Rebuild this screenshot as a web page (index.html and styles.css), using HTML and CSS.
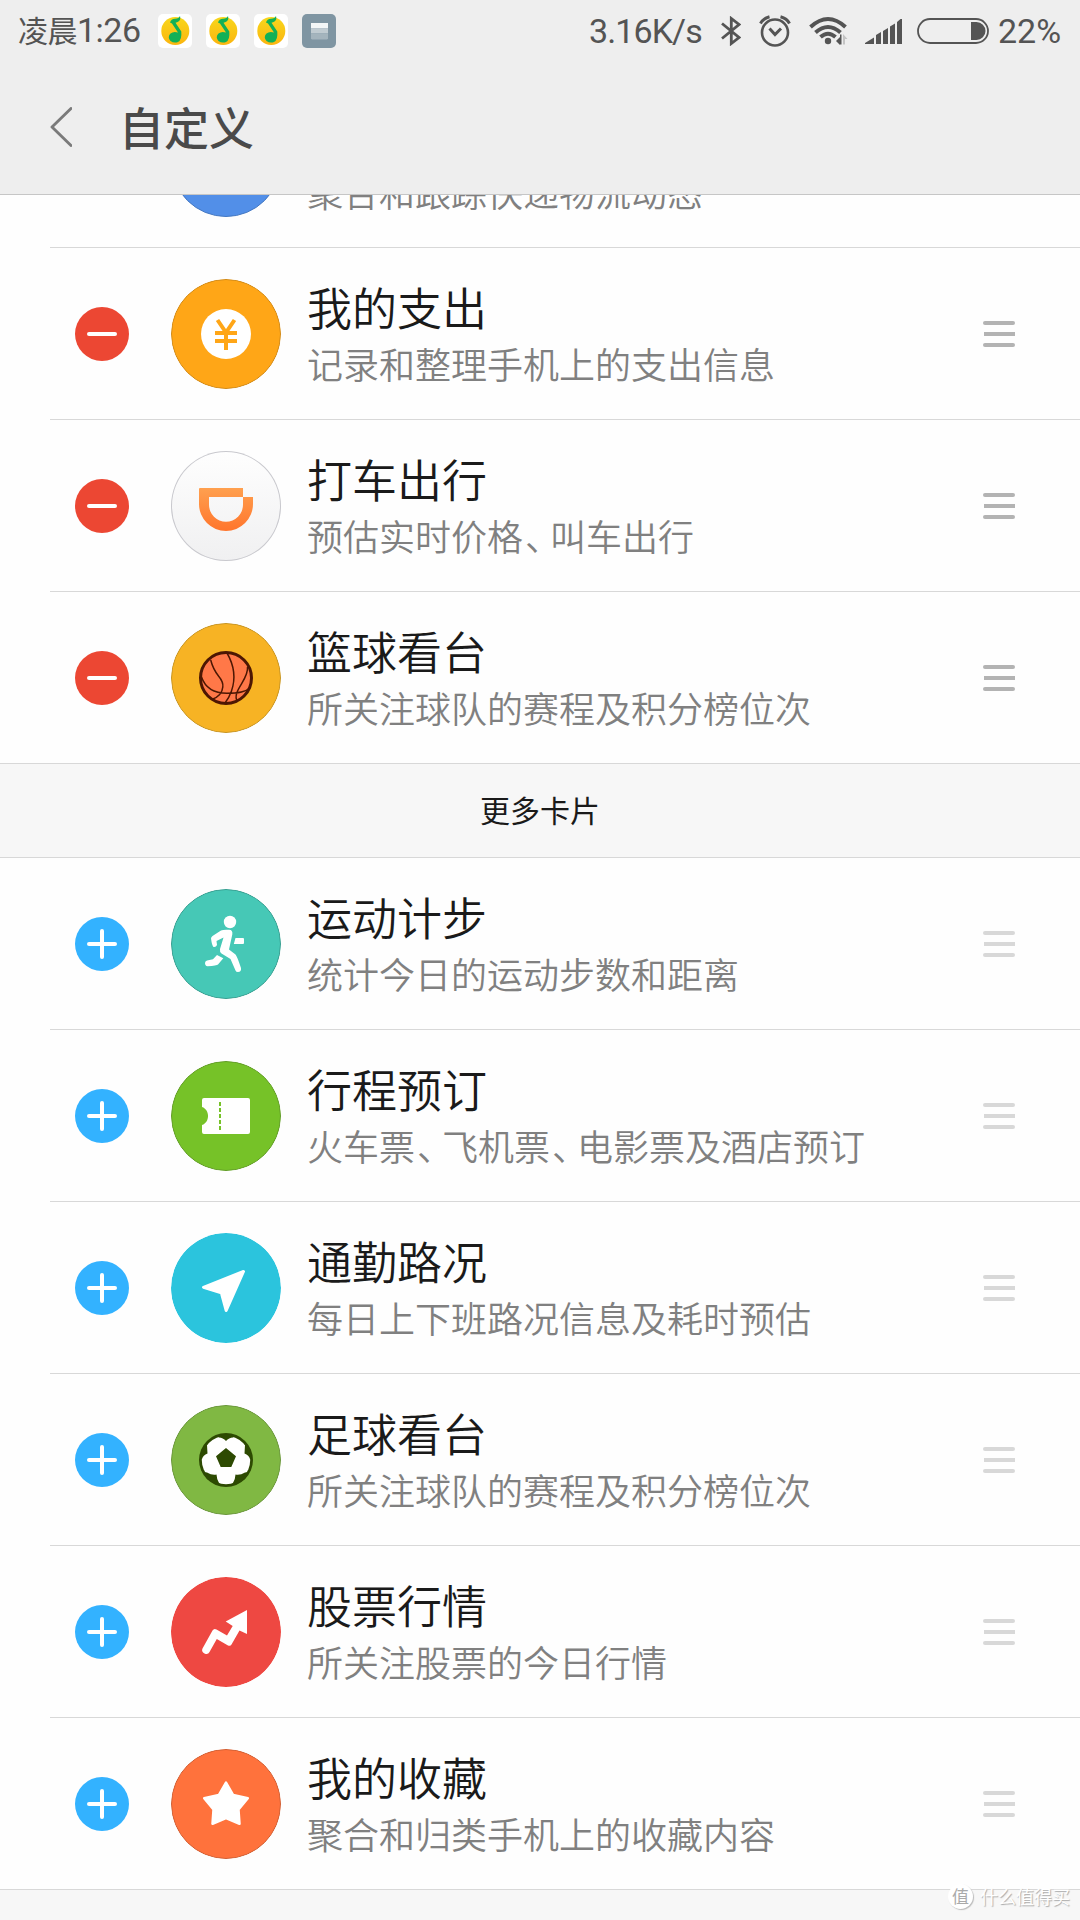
FILE: index.html
```html
<!DOCTYPE html>
<html lang="zh-CN">
<head>
<meta charset="utf-8">
<title>自定义</title>
<link rel="stylesheet" href="styles.css">
</head>
<body>
<svg class="defs" width="0" height="0" aria-hidden="true">
  <defs>
    <linearGradient id="gold" x1="0" y1="0" x2="0" y2="1"><stop offset="0" stop-color="#f8d71c"/><stop offset="1" stop-color="#fbb50f"/></linearGradient>
    <linearGradient id="didi" x1="0" y1="0" x2="0" y2="1"><stop offset="0" stop-color="#ffa04f"/><stop offset="1" stop-color="#ff752c"/></linearGradient>
    <symbol id="music" viewBox="0 0 34 34">
      <rect width="34" height="34" rx="5" fill="#fff"/>
      <circle cx="17.3" cy="17" r="14" fill="url(#gold)"/>
      <path d="M12 8.500Q13 5 17 4.700Q21 4.500 22 2Q23 6 20.500 7.500Q19 8.500 17.500 8.800L23.300 17.500Q24 26 20 28Q16 29.500 12.500 27Q9 23 12.500 19.500Q15.500 17 20 18.500L14 9.500Z" fill="#12b057"/>
    </symbol>
  </defs>
</svg>

<header class="top">
  <div class="status">
    <div class="status-left">
      <span class="clock"><span class="cjk">凌晨</span>1:26</span>
      <svg class="app"><use href="#music"/></svg>
      <svg class="app"><use href="#music"/></svg>
      <svg class="app"><use href="#music"/></svg>
      <svg class="app" viewBox="0 0 34 34"><rect width="34" height="34" rx="5" fill="#7f95a2"/><rect x="9" y="9" width="17" height="5.500" fill="#f3f6f7"/><rect x="9" y="15" width="17" height="4.500" fill="#c0cbd1"/><path d="M9 20H26V24.500L25 25.500H10L9 24.500Z" fill="#a4b4bd"/></svg>
    </div>
    <div class="status-right">
      <span class="speed">3.16K/s</span>
      <svg class="bt" viewBox="0 0 20 30" fill="none" stroke="#545454" stroke-width="2.800"><path d="M1 7.500L18 21.500L10.300 27.500V2.500L18 8.500L1 22.500"/></svg>
      <svg class="alarm" viewBox="0 0 32 32" fill="none" stroke="#545454" stroke-width="2.600"><circle cx="16" cy="17.500" r="13"/><path d="M10.500 13.500L16 19.500L22 13.500M1.500 8.500Q4 3.500 10.500 1.800M30.500 8.500Q28 3.500 21.500 1.800" stroke-width="3"/></svg>
      <svg class="wifi" viewBox="0 0 38 28"><g fill="none" stroke="#545454" stroke-width="4"><path d="M1.500 10Q19-6 36.500 10M6.500 15.500Q19 4.500 31.500 15.500M11.500 20Q19 13.500 26.500 20"/></g><circle cx="19" cy="24" r="3.200" fill="#545454"/><path d="M27 24L31 20V28Z" fill="#545454"/><path d="M31 17.500h1.500v10h-1.500z" fill="#545454"/><path d="M34 17L38.500 22H36V27.500H34Z" fill="#c4c4c4"/></svg>
      <svg class="signal" viewBox="0 0 37 25" fill="#545454"><path d="M0 25V24L9 18.500V25ZM11 25V16L16 13V25ZM18 25V12L23 9V25ZM25 25V7.500L30 4.500V25ZM32 25V3L35.500 0H37V25Z"/></svg>
      <svg class="battery" viewBox="0 0 72 26"><rect x="1" y="1" width="70" height="24" rx="12" fill="none" stroke="#545454" stroke-width="1.800"/><path d="M54 4H59.500A9 9 0 0 1 59.500 22H54Z" fill="#545454"/></svg>
      <span class="percent">22%</span>
    </div>
  </div>
  <div class="titlebar">
    <svg class="back" viewBox="0 0 22 40"><path d="M21 1.500L2 20L21 38.500" fill="none" stroke="#7a7a7a" stroke-width="2.900" stroke-linecap="round" stroke-linejoin="round"/></svg>
    <h1>自定义</h1>
  </div>
</header>

<main class="list">
  <section class="active">
    <div class="row first">
      <span class="icon blue"></span>
      <div class="text"><p>聚合和跟踪快递物流动态</p></div>
    </div>
    <div class="row">
      <span class="toggle remove"></span>
      <svg class="icon" viewBox="0 0 110 110"><circle cx="55" cy="55" r="54.500" fill="#ffa617" stroke="#d18a18"/><circle cx="55" cy="55" r="25" fill="#fff"/><path d="M46.500 41L55 53.500L63.500 41M44 54H66M44 62H66M55 52V71" fill="none" stroke="#ffa617" stroke-width="4"/></svg>
      <div class="text"><h2>我的支出</h2><p>记录和整理手机上的支出信息</p></div>
      <span class="drag"></span>
    </div>
    <div class="row">
      <span class="toggle remove"></span>
      <svg class="icon white" viewBox="0 0 110 110"><path fill-rule="evenodd" fill="url(#didi)" d="M29 37H72V46H82V53A27 27 0 0 1 28 53V38A1 1 0 0 1 29 37ZM38 46V53.700A17 17 0 0 0 72 53.700V46Z"/></svg>
      <div class="text"><h2>打车出行</h2><p>预估实时价格<span class="comma">、</span>叫车出行</p></div>
      <span class="drag"></span>
    </div>
    <div class="row">
      <span class="toggle remove"></span>
      <svg class="icon" viewBox="0 0 110 110"><circle cx="55" cy="55" r="54.500" fill="#f7b324" stroke="#c69424"/><circle cx="55" cy="55" r="25.500" fill="#ff7848" stroke="#4d1703" stroke-width="3"/><path d="M39.700 37Q42 46 47.500 53Q52.500 59 51.800 64Q51 73 40.700 76.500M56 30Q67 49 60.500 68Q58 75 54 80M76.500 44C78 57 60 68 66.500 79M30.500 54C35 67 45 70.300 56 70.300S74 69.500 79 65" fill="none" stroke="#4d1703" stroke-width="1.500"/></svg>
      <div class="text"><h2>篮球看台</h2><p>所关注球队的赛程及积分榜位次</p></div>
      <span class="drag"></span>
    </div>
  </section>

  <div class="divider">更多卡片</div>

  <section class="more">
    <div class="row">
      <span class="toggle add"></span>
      <svg class="icon" viewBox="0 0 110 110"><circle cx="55" cy="55" r="54.500" fill="#46c8b6" stroke="#389e90"/><g fill="#fff"><circle cx="59" cy="33" r="6.200"/><path d="M50 41.500Q52 40.500 58 40.800Q62 41 61.300 45.500L58 60.500L64.500 65.500Q66 67 70 79Q70.500 83 67 83Q65 83 64.500 81.500L59.500 70L50.500 64.500Q48.500 63 49 60L52.500 48.500L45.500 52L46 56Q45 58.500 42.500 58Q41 57 40 49.500Q40 48 41.500 47ZM64.500 49H72Q73 49 73 50V54Q73 55 72 55H62.800ZM46 66L52.300 69.300L47 75.500Q46 76.500 36.500 77.300Q34 77 34 74Q34 72 36 71.500L42 70.300Z"/></g></svg>
      <div class="text"><h2>运动计步</h2><p>统计今日的运动步数和距离</p></div>
      <span class="drag"></span>
    </div>
    <div class="row">
      <span class="toggle add"></span>
      <svg class="icon" viewBox="0 0 110 110"><circle cx="55" cy="55" r="54.500" fill="#76c228" stroke="#629c28"/><path d="M33 37H77Q79 37 79 39V71Q79 73 77 73H33Q31 73 31 71V64C39 61.500 39 48.500 31 46V39Q31 37 33 37Z" fill="#fff"/><path d="M49 41V69" stroke="#76c228" stroke-width="2" stroke-dasharray="4 2"/></svg>
      <div class="text"><h2>行程预订</h2><p>火车票<span class="comma">、</span>飞机票<span class="comma">、</span>电影票及酒店预订</p></div>
      <span class="drag"></span>
    </div>
    <div class="row">
      <span class="toggle add"></span>
      <svg class="icon" viewBox="0 0 110 110"><circle cx="55" cy="55" r="55" fill="#2bc4dd"/><path d="M72.500 38.500L32.500 54.300L50.300 59.700L55.200 77.500Z" fill="#fff" stroke="#fff" stroke-width="3" stroke-linejoin="round"/></svg>
      <div class="text"><h2>通勤路况</h2><p>每日上下班路况信息及耗时预估</p></div>
      <span class="drag"></span>
    </div>
    <div class="row">
      <span class="toggle add"></span>
      <svg class="icon" viewBox="0 0 110 110"><circle cx="55" cy="55" r="54.500" fill="#80b843" stroke="#6a963c"/><circle cx="55" cy="55" r="27" fill="#2d4a02"/><circle cx="55" cy="55" r="24.200" fill="#fff"/><path d="M55 43L65 51.300L60.300 62H49.700L45 51.300ZM46.500 31L48 32.500Q52 32.500 55 36Q58 32.500 62 32.500L63.500 31L55 29ZM37 37L36 40L36.500 48.500Q32 50 31 54L29 54L31 44ZM73 37L74 40L73.500 48.500Q78 50 79 54L81 54L79 44ZM33 67L36 67.500Q41 70.500 45.500 69.500Q45.500 74 48.500 79L44 79L36 74ZM77 67L74 67.500Q69 70.500 64.500 69.500Q64.500 74 61.500 79L66 79L74 74Z" fill="#2d4a02"/></svg>
      <div class="text"><h2>足球看台</h2><p>所关注球队的赛程及积分榜位次</p></div>
      <span class="drag"></span>
    </div>
    <div class="row">
      <span class="toggle add"></span>
      <svg class="icon" viewBox="0 0 110 110"><circle cx="55" cy="55" r="55" fill="#ee4842"/><path d="M31.500 71.500L41.500 53.500Q43 51 45.500 52.500L56 58.500L61.700 49L54.700 44.500L76 33V57L68.500 53.500L60.500 67.500Q59.500 69.500 57 68.500L45.800 62L38.500 75Q37 78 33.500 76.500Q30 74.500 31.500 71.500Z" fill="#fff"/></svg>
      <div class="text"><h2>股票行情</h2><p>所关注股票的今日行情</p></div>
      <span class="drag"></span>
    </div>
    <div class="row">
      <span class="toggle add"></span>
      <svg class="icon" viewBox="0 0 110 110"><circle cx="55" cy="55" r="54.500" fill="#ff723c" stroke="#d05f34"/><path d="M55 33.500L62.200 46L76.800 49.300L67.500 60.500L68.500 74.800L55 69L41.500 74.800L42.500 60.500L33.200 49.300L47.800 46Z" fill="#fff" stroke="#fff" stroke-width="2.500" stroke-linejoin="round"/></svg>
      <div class="text"><h2>我的收藏</h2><p>聚合和归类手机上的收藏内容</p></div>
      <span class="drag"></span>
    </div>
  </section>
</main>

<div class="watermark"><span class="badge">值</span><span class="brand">什么值得买</span></div>
</body>
</html>
```
FILE: styles.css
```css
* { box-sizing: border-box; }

body {
  margin: 0;
  width: 1080px;
  height: 1920px;
  display: flex;
  flex-direction: column;
  position: relative;
  overflow: hidden;
  background: #f7f7f7;
  font-family: "Noto Sans CJK SC", sans-serif;
  font-weight: 400;
}

h1, h2, p { margin: 0; white-space: nowrap; }
svg { display: block; flex: none; }
.defs { position: absolute; }

.top {
  flex: none;
  height: 195px;
  background: #eee;
  border-bottom: 1px solid #c6c6c6;
}

.status {
  height: 61px;
  display: flex;
  justify-content: space-between;
  align-items: center;
  padding: 0 18px;
  color: #545454;
  font-family: Roboto, "Noto Sans CJK SC", sans-serif;
  font-size: 34px;
  line-height: 40px;
  white-space: nowrap;
}
.status-left, .status-right { display: flex; align-items: center; }
.status-left { gap: 14px; }
.clock { width: 126px; letter-spacing: -0.5px; }
.cjk { font-size: 30px; letter-spacing: -0.5px; }
.app { width: 34px; height: 34px; }
.speed { width: 113px; margin-right: 19px; letter-spacing: -0.9px; }
.bt { width: 20px; height: 30px; margin-right: 18px; }
.alarm { width: 32px; height: 32px; margin-right: 18px; }
.wifi { width: 38px; height: 28px; margin-right: 18px; overflow: visible; }
.signal { width: 37px; height: 25px; margin: 2px 15px 0 0; }
.battery { width: 72px; height: 26px; margin-right: 9px; }
.percent { width: 64px; letter-spacing: 0; }

.titlebar {
  height: 132px;
  display: flex;
  align-items: center;
  gap: 47px;
  padding-left: 50px;
}
.back { width: 22px; height: 40px; }
h1 { color: #4a4a4a; font-size: 45px; font-weight: 500; line-height: 60px; padding-bottom: 1px; }

.list { flex: none; overflow: hidden; }
.active, .more { background: #fefefe; }
.active, .more, .divider { border-bottom: 1px solid #d8d8d8; }

.row {
  height: 172px;
  margin-left: 50px;
  padding: 31px 65px 0 25px;
  display: flex;
  align-items: flex-start;
  border-bottom: 1px solid #d8d8d8;
}
.row:last-child { height: 171px; border-bottom: 0; }

/* Scrolled partly under the title bar: only the end of the card shows. */
.first { margin-top: -119px; padding-left: 121px; }
.first .text { padding-top: 56px; }

.toggle {
  flex: none;
  width: 54px;
  height: 54px;
  margin: 28px 42px 0 0;
  border-radius: 50%;
  display: grid;
  place-items: center;
}
.toggle::before, .toggle::after {
  content: "";
  grid-area: 1 / 1;
  width: 30px;
  height: 4px;
  border-radius: 2px;
  background: #fff;
}
.remove { background: #ec4733; }
.add { background: #33b2ff; }
.remove::after { display: none; }
.add::after { transform: rotate(90deg); }

.icon { flex: none; width: 110px; height: 110px; border-radius: 50%; }
.blue { background: #528fe8; border: 1px solid #4478c2; }
.white { background: linear-gradient(#fefefe, #f0f0f1); box-shadow: inset 0 0 0 1px #c9c9ce; }

.text { flex: 1; padding-left: 26px; }
h2 { color: #1a1a1a; font-size: 45px; font-weight: 350; line-height: 56px; }
p { color: #808080; font-size: 36px; font-weight: 350; line-height: 56px; }
.comma { margin-left: 2px; letter-spacing: -11px; }

.drag {
  flex: none;
  width: 32px;
  height: 26px;
  margin-top: 42px;
  display: flex;
  flex-direction: column;
  justify-content: space-between;
  color: #b3b3b3;
  background: linear-gradient(currentColor, currentColor) 50% 50% / 31px 4px no-repeat;
}
.more .drag { color: #d8d8d8; }
.drag::before, .drag::after {
  content: "";
  height: 4px;
  border-radius: 2px;
  background: currentColor;
}

.divider {
  height: 94px;
  display: flex;
  align-items: center;
  justify-content: center;
  padding-bottom: 3px;
  color: #1a1a1a;
  font-size: 30px;
  line-height: 44px;
}

.watermark {
  position: absolute;
  right: 10px;
  bottom: 11px;
  display: flex;
  align-items: center;
  gap: 7px;
  color: #fff;
  line-height: 26px;
  white-space: nowrap;
}
.badge {
  width: 25px;
  height: 25px;
  border-radius: 50%;
  background: #fff;
  box-shadow: 1px 1px 1px #bbb;
  color: #aaa;
  font-size: 17px;
  line-height: 24px;
  text-align: center;
}
.brand { font-size: 18px; text-shadow: 1px 1px 1px #aaa; }
```
